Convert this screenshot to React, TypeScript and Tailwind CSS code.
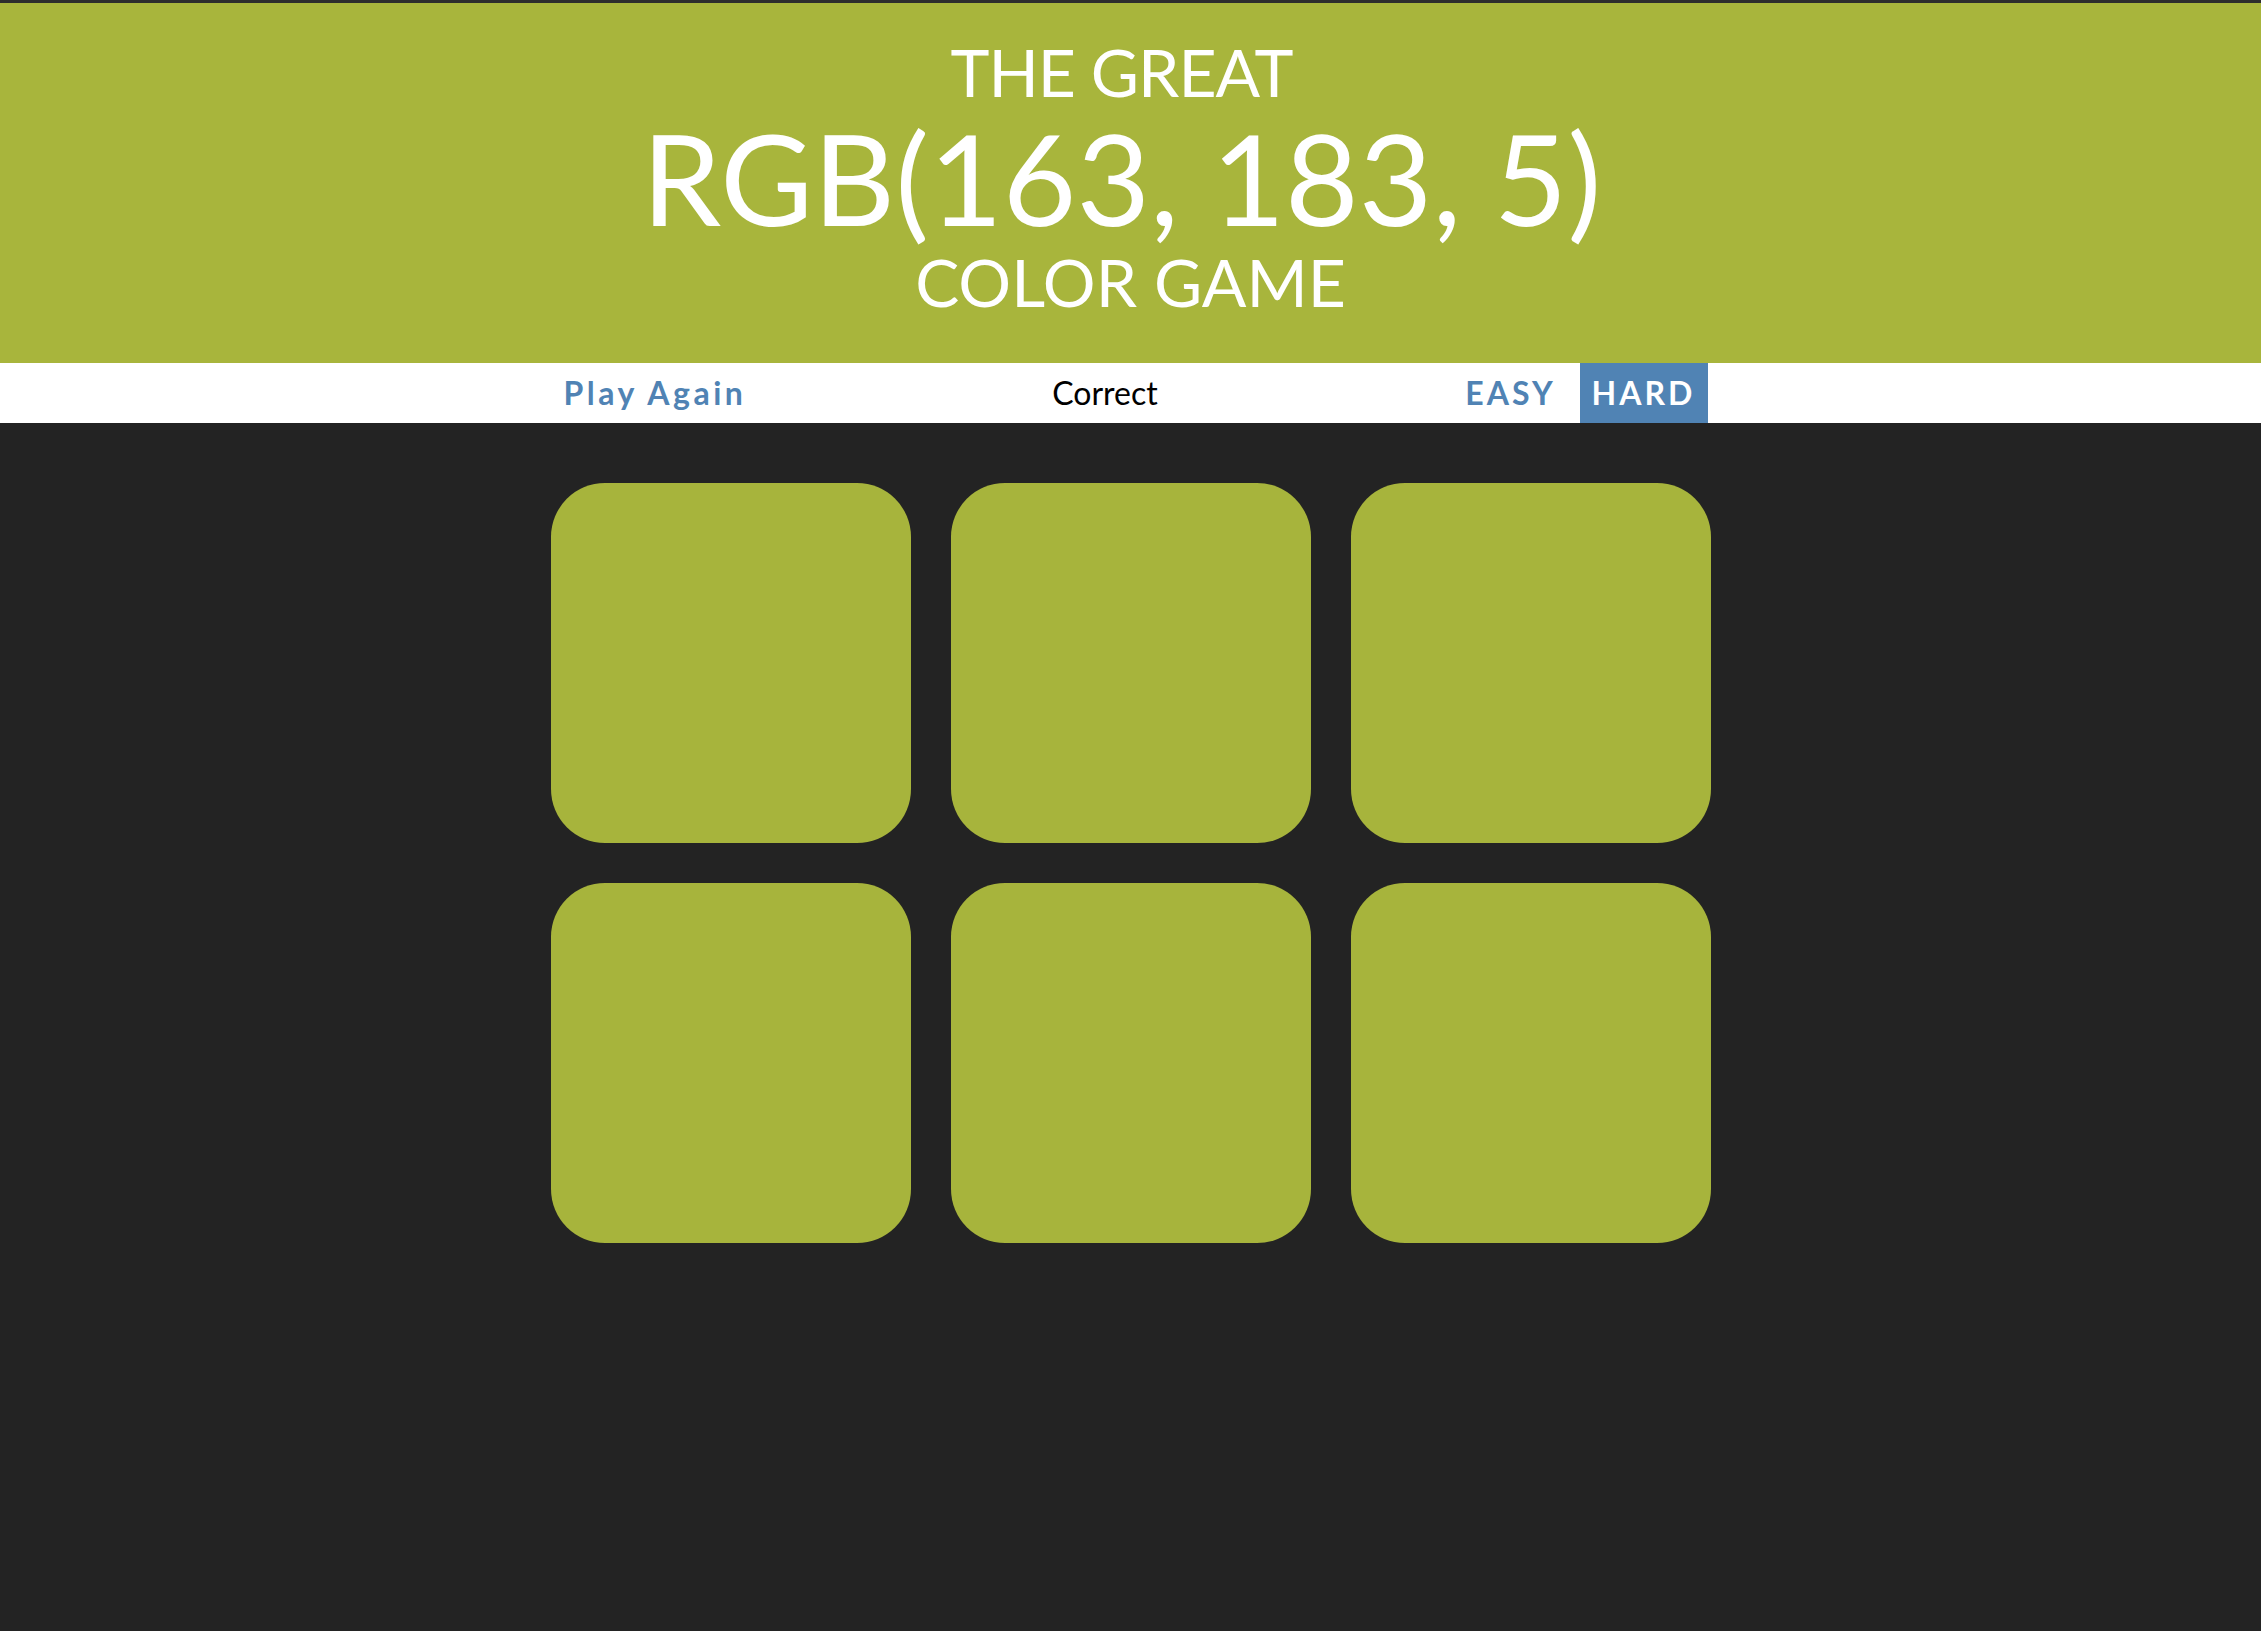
export default function App() {
  const squares = [0, 1, 2, 3, 4, 5];

  return (
    <div className="min-h-screen bg-[#232323] font-['Lato',sans-serif]">
      <header className="border-t-[3px] border-[#2d2d2d] bg-[#a8b53c] pt-[34px] pb-[46px] text-center font-normal uppercase text-white">
        <div className="h-[70px] pr-[18px] text-[66px] leading-[70px] tracking-[-1px]">The Great</div>
        <div className="h-[140px] pr-[18px] text-[127px] leading-[140px]">RGB(163, 183, 5)</div>
        <div className="h-[70px] text-[66px] leading-[70px]">Color Game</div>
      </header>

      <div className="flex h-[60px] items-center justify-center bg-white text-[32px]">
        <button className="h-full w-[203px] font-bold tracking-[3.5px] text-[#5083b4]">Play Again</button>
        <span className="w-[697px] text-center text-black">Correct</span>
        <button className="h-full w-[114px] font-bold uppercase tracking-[3px] text-[#5083b4]">Easy</button>
        <button className="ml-[12px] h-full w-[128px] bg-[#5083b4] font-bold uppercase tracking-[3px] text-white">
          Hard
        </button>
      </div>

      <div className="mx-auto mt-[40px] grid w-[1200px] grid-cols-3 gap-[40px] p-[20px]">
        {squares.map((i) => (
          <div key={i} className="aspect-square rounded-[15%] bg-[#a7b43c]" />
        ))}
      </div>
    </div>
  );
}
